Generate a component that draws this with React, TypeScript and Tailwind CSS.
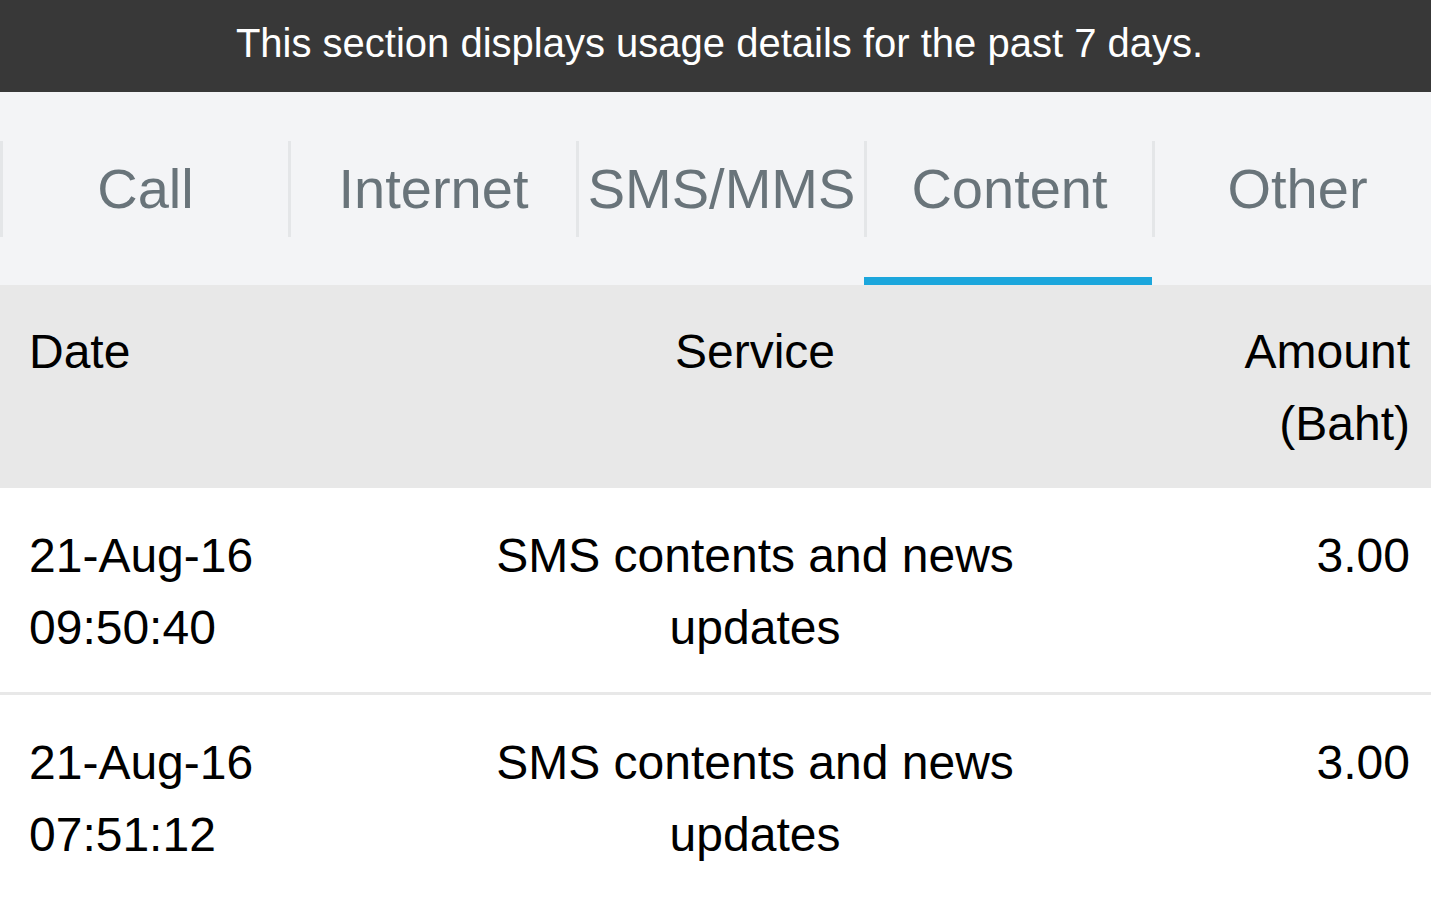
const tabs = ["Call", "Internet", "SMS/MMS", "Content", "Other"];

const rows = [
  { date: "21-Aug-16", time: "09:50:40", service: "SMS contents and news updates", amount: "3.00" },
  { date: "21-Aug-16", time: "07:51:12", service: "SMS contents and news updates", amount: "3.00" },
];

const App = () => {
  const active = "Content";

  return (
    <div className="w-[1431px] h-[907px] overflow-hidden bg-white font-['Liberation_Sans',Arial,sans-serif]">
      <div className="h-[92px] bg-[#383838] pl-[8px] text-center text-[40px] leading-[86px] text-white">
        This section displays usage details for the past 7 days.
      </div>

      <div className="flex h-[193px] overflow-hidden bg-[#f3f4f6]">
        {tabs.map((tab) => (
          <div key={tab} className="flex w-[288px] shrink-0 flex-col">
            <div className="mt-[49px] flex h-[96px] items-center justify-center border-l-[3px] border-[#e4e6e8] text-[56px] text-[#69747a]">
              {tab}
            </div>
            <div className={`mt-auto h-[8px] ${tab === active ? "bg-[#1ba6dc]" : ""}`} />
          </div>
        ))}
      </div>

      <div className="grid grid-cols-[446px_560px_1fr] bg-[#e8e8e8] pl-[29px] pr-[21px] pt-[31px] pb-[28px] text-[48px] leading-[72px] text-black">
        <div>Date</div>
        <div className="text-center">Service</div>
        <div className="text-right">
          Amount
          <br />
          (Baht)
        </div>
      </div>

      {rows.map((row, index) => (
        <div
          key={index + row.time}
          className="grid grid-cols-[446px_560px_1fr] border-b-[3px] border-[#e8e8e8] pl-[29px] pr-[21px] pt-[32px] pb-[28px] text-[48px] leading-[72px] text-black last:border-b-0"
        >
          <div>
            {row.date}
            <br />
            {row.time}
          </div>
          <div className="text-center">{row.service}</div>
          <div className="text-right">{row.amount}</div>
        </div>
      ))}
    </div>
  );
};

export default App;
